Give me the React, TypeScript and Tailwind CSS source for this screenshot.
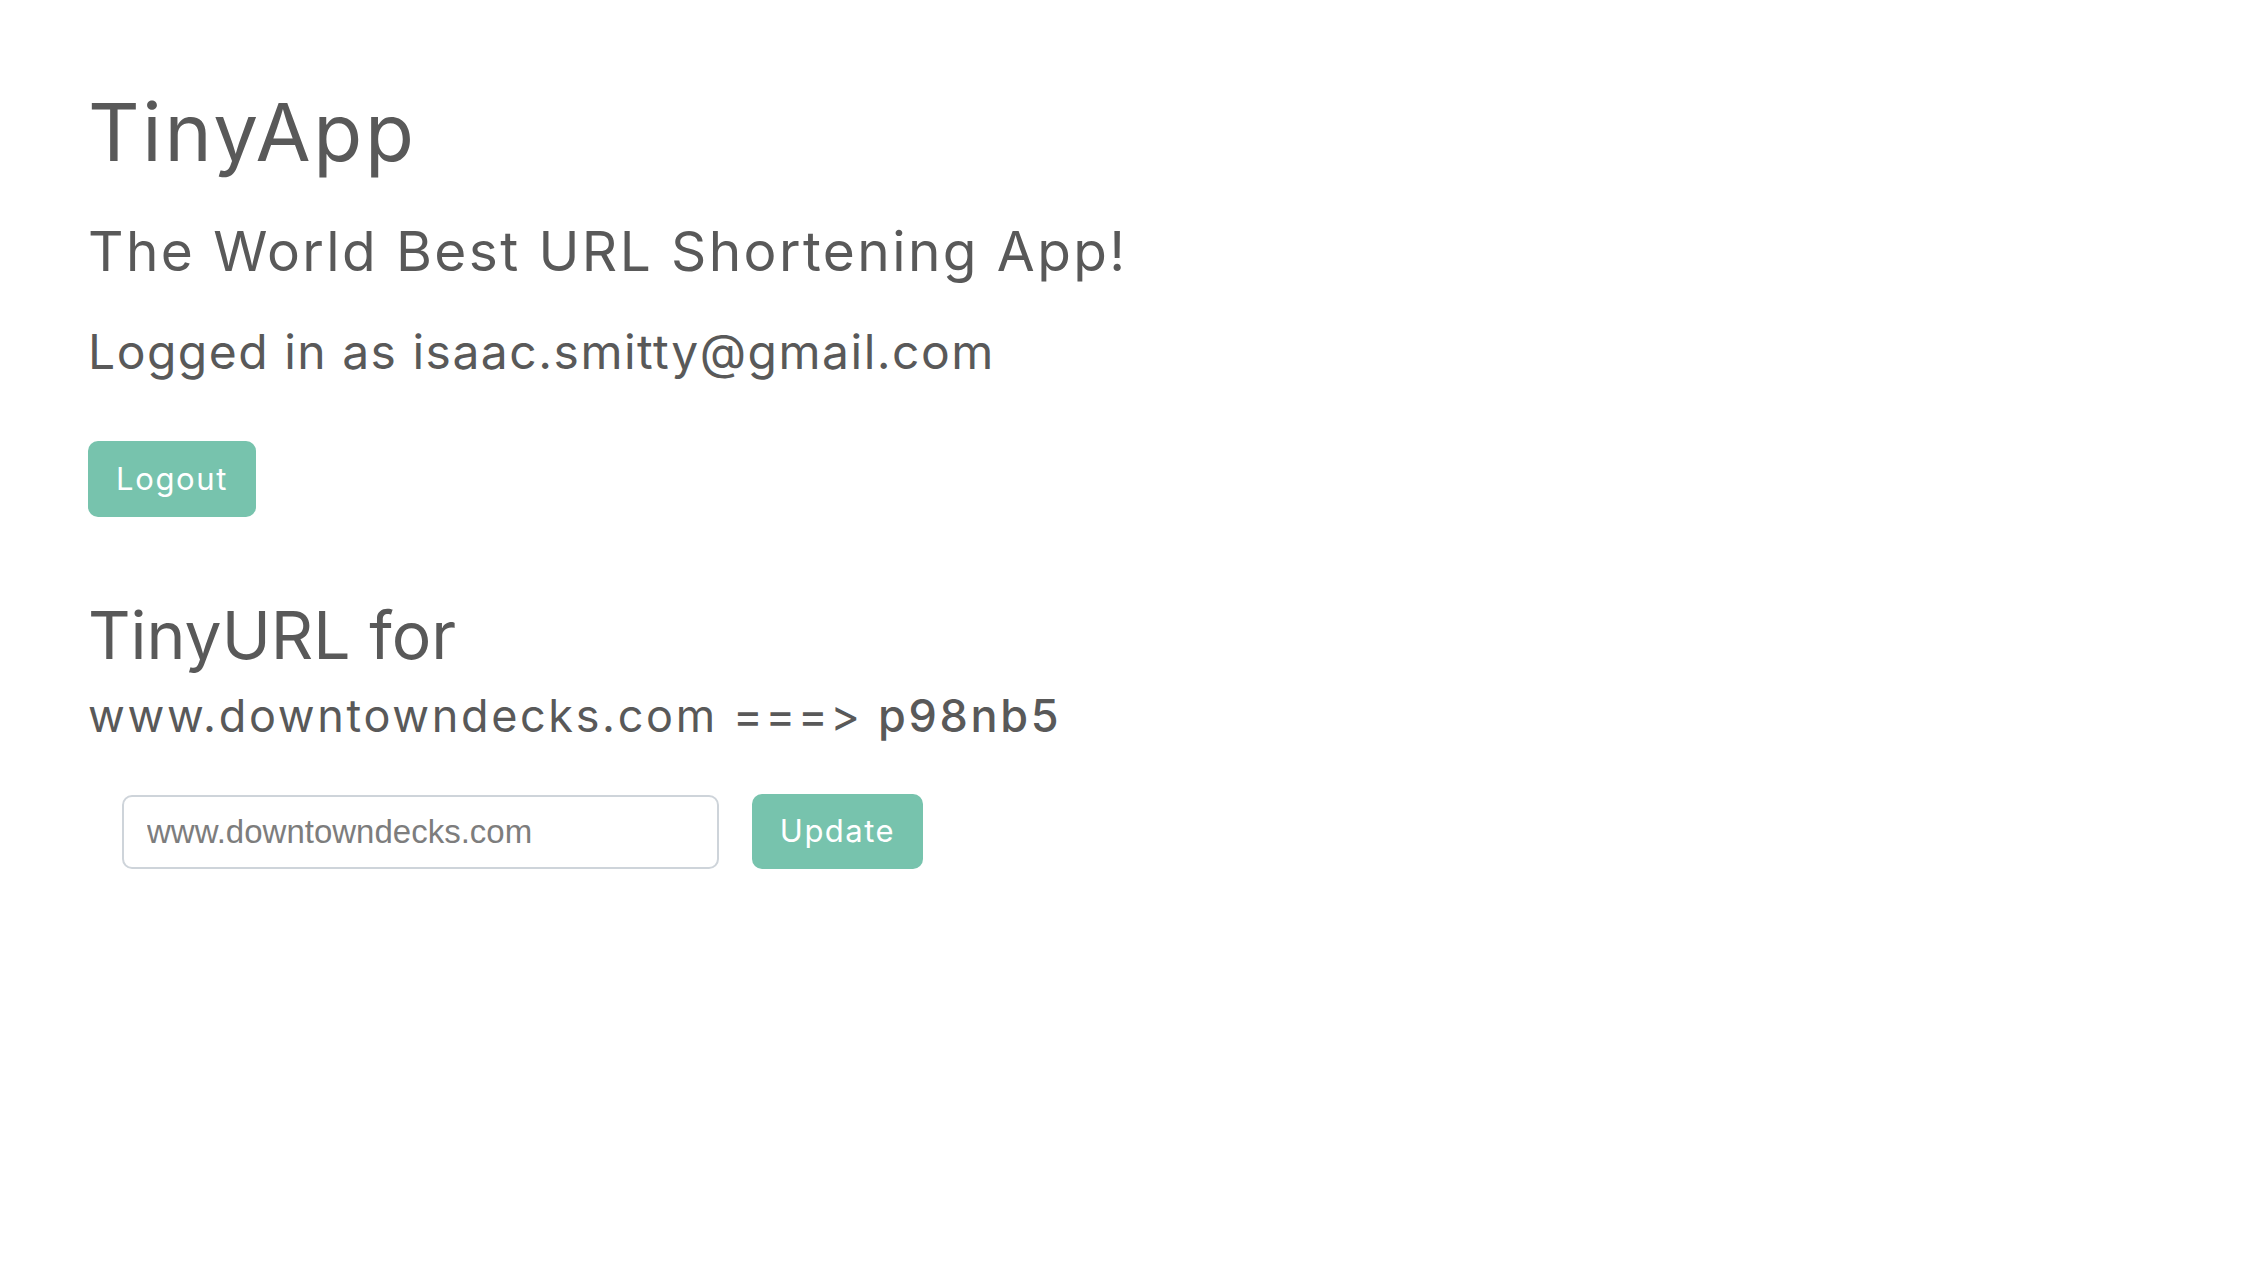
export default function App() {
  return (
    <div className="min-h-[1266px] w-full bg-white pl-[88px] text-[#595959] font-['Inter',sans-serif] [font-feature-settings:'calt'_0,'liga'_0]">
      <div className="flex flex-col items-start pt-[92px]">
        <h1 className="text-[80px] leading-none font-normal tracking-[2.7px]">TinyApp</h1>
        <h2 className="mt-[52px] text-[55px] leading-none font-normal tracking-[2.4px]">The World Best URL Shortening App!</h2>
        <h3 className="mt-[49px] text-[48px] leading-none font-normal tracking-[1.5px]">Logged in as isaac.smitty@gmail.com</h3>

        <button className="mt-[65px] h-[76px] w-[168px] rounded-[10px] bg-[#77c3ad] text-[31px] tracking-[1.6px] text-white">
          Logout
        </button>

        <h2 className="mt-[85px] text-[66px] leading-none font-normal">TinyURL for</h2>
        <p className="mt-[25px] text-[45px] leading-none tracking-[2.65px]">
          www.downtowndecks.com ===&gt; <span className="font-medium">p98nb5</span>
        </p>

        <form className="mt-[56px] ml-[34px] flex items-center gap-[33px]" onSubmit={(e) => e.preventDefault()}>
          <input
            type="text"
            placeholder="www.downtowndecks.com"
            className="h-[74px] w-[597px] rounded-[10px] border-2 border-[#ced4da] bg-white px-[23px] text-[33px] font-['Liberation_Sans',sans-serif] text-[#495057] placeholder:text-[#7d7d7d] outline-none"
          />
          <button type="submit" className="h-[75px] w-[171px] rounded-[10px] bg-[#77c3ad] text-[31px] tracking-[1.5px] text-white">
            Update
          </button>
        </form>
      </div>
    </div>
  );
}
